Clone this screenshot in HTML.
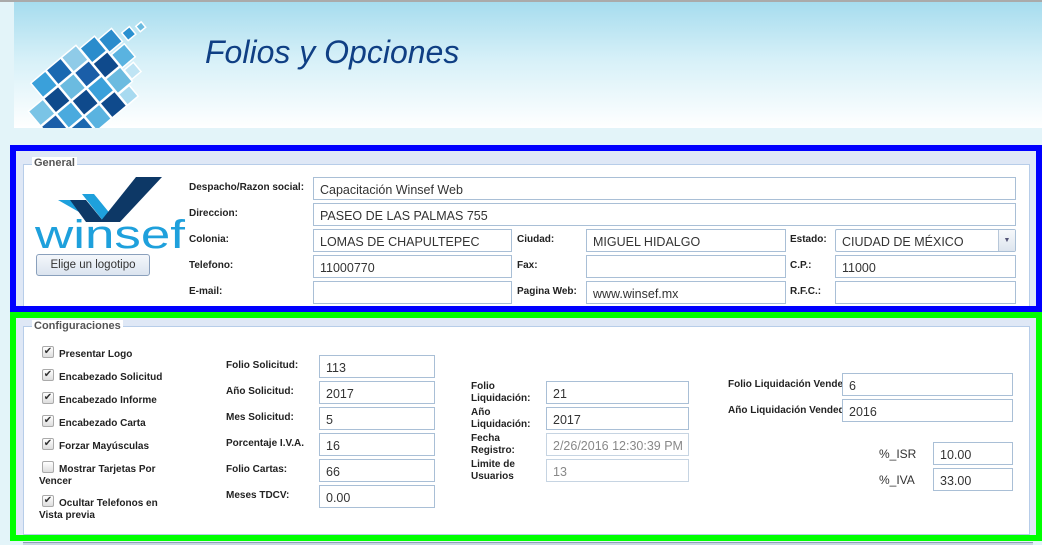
<!DOCTYPE html>
<html><head><meta charset="utf-8"><style>
*{margin:0;padding:0;box-sizing:border-box}
body{width:1042px;height:545px;overflow:hidden;background:#e3f4f9;font-family:"Liberation Sans",Arial,sans-serif;position:relative}
.a{position:absolute}
.hdr{left:14px;top:2px;width:1028px;height:126px;background:linear-gradient(#a6dcee 0%,#d6f0f8 45%,#fff 100%);overflow:hidden}
.title{left:191px;top:32px;font-size:32px;font-style:italic;color:#0f3f84;white-space:nowrap}
.box{border:6px solid #0000ff;background:#dfe8f6}
.fs{border:1px solid #b7cde9;background:#fff}
.lg{font-size:11px;font-weight:bold;color:#555;background:#fff;padding:0 2px}
.l{font-size:10px;font-weight:bold;color:#222;white-space:nowrap;line-height:12px}
.i{border:1px solid #a9bfd6;background:#fff;height:23px;font-size:12.5px;color:#333;padding:5px 0 0 6px;white-space:nowrap;overflow:hidden}
.g{color:#888;border-color:#c6d4e2}
.cb{width:12px;height:12px;border:1px solid #aaa;border-radius:2px;background:linear-gradient(#fff,#ddd);font-size:10px;line-height:10px;text-align:center;color:#333}
.ct{font-size:10px;font-weight:bold;color:#222;line-height:12px}
</style></head><body>
<div class="a" style="left:0;top:0;width:1042px;height:2px;background:#aaa"></div>
<div class="a hdr">
<svg width="200" height="126" style="position:absolute;left:0;top:0">
<g stroke="#fff" stroke-width="1.5" transform="translate(40,140) rotate(-40)">
<rect x="0" y="-40" width="19" height="19" fill="#7ac4e6"/><rect x="0" y="-20" width="19" height="19" fill="#1a5ea8"/><rect x="0" y="0" width="19" height="19" fill="#2a8ccc"/>
<rect x="20" y="-60" width="19" height="19" fill="#3aa0da"/><rect x="20" y="-40" width="19" height="19" fill="#0f4a8c"/><rect x="20" y="-20" width="19" height="19" fill="#4aaade"/><rect x="20" y="0" width="19" height="19" fill="#1a68b0"/>
<rect x="40" y="-60" width="19" height="19" fill="#1a68b0"/><rect x="40" y="-40" width="19" height="19" fill="#6bbbe0"/><rect x="40" y="-20" width="19" height="19" fill="#0f4a8c"/><rect x="40" y="0" width="19" height="19" fill="#5ab3e0"/>
<rect x="60" y="-60" width="19" height="19" fill="#8fcbe8"/><rect x="60" y="-40" width="19" height="19" fill="#1a5ea8"/><rect x="60" y="-20" width="19" height="19" fill="#3aa0da"/><rect x="60" y="0" width="19" height="19" fill="#0f4a8c"/>
<rect x="80" y="-55" width="19" height="19" fill="#2a8ccc"/><rect x="80" y="-35" width="19" height="19" fill="#0f4a8c"/><rect x="80" y="-15" width="19" height="19" fill="#6bbbe0"/><rect x="80" y="5" width="14" height="14" fill="#a8daf0"/>
<rect x="100" y="-50" width="17" height="17" fill="#2a8ccc"/><rect x="100" y="-30" width="17" height="17" fill="#5ab3e0"/><rect x="100" y="-10" width="12" height="12" fill="#bfe4f4"/>
<rect x="122" y="-40" width="10" height="10" fill="#2a90d0"/><rect x="137" y="-36" width="7" height="7" fill="#6bbbe0"/>
</g></svg>
<div class="a title">Folios y Opciones</div>
</div>

<!-- General -->
<div class="a box" style="left:10px;top:145px;width:1032px;height:167px"></div>
<div class="a fs" style="left:23px;top:164px;width:1007px;height:142px;border-bottom:none"></div>
<div class="a lg" style="left:32px;top:157px">General</div>
<svg class="a" style="left:34px;top:176px" width="155" height="76">
<polygon points="24,24 46,24 56,34 52,40" fill="#1ea0dc"/>
<polygon points="36,24 52,24 70,46 52,46" fill="#0d3866"/>
<polygon points="48,18 60,18 78,40 70,46" fill="#1ea0dc"/>
<polygon points="102,1 128,1 86,46 66,46" fill="#0d3866"/>
<text x="1" y="72" font-family="Liberation Sans,sans-serif" font-size="40" fill="#1ea0dc" textLength="150" lengthAdjust="spacingAndGlyphs">winsef</text>
</svg>
<div class="a" style="left:36px;top:254px;width:114px;height:22px;border:1px solid #8aa0bc;border-radius:3px;background:linear-gradient(#f4f7fb,#dbe4ef);font-size:11.5px;color:#333;text-align:center;line-height:20px">Elige un logotipo</div>

<div class="a l" style="left:189px;top:182px">Despacho/Razon social:</div>
<div class="a i" style="left:313px;top:177px;width:703px">Capacitación Winsef Web</div>
<div class="a l" style="left:189px;top:208px">Direccion:</div>
<div class="a i" style="left:313px;top:203px;width:703px">PASEO DE LAS PALMAS 755</div>
<div class="a l" style="left:189px;top:234px">Colonia:</div>
<div class="a i" style="left:313px;top:229px;width:199px">LOMAS DE CHAPULTEPEC</div>
<div class="a l" style="left:517px;top:234px">Ciudad:</div>
<div class="a i" style="left:586px;top:229px;width:200px">MIGUEL HIDALGO</div>
<div class="a l" style="left:790px;top:234px">Estado:</div>
<div class="a i" style="left:835px;top:229px;width:181px;border-radius:2px">CIUDAD DE MÉXICO</div>
<div class="a" style="left:998px;top:230px;width:17px;height:21px;border-left:1px solid #b7c7d9;background:linear-gradient(#f6f8fb,#dde5ee);font-size:7px;color:#557;text-align:center;line-height:21px">▼</div>
<div class="a l" style="left:189px;top:260px">Telefono:</div>
<div class="a i" style="left:313px;top:255px;width:199px">11000770</div>
<div class="a l" style="left:517px;top:260px">Fax:</div>
<div class="a i" style="left:586px;top:255px;width:200px"></div>
<div class="a l" style="left:790px;top:260px">C.P.:</div>
<div class="a i" style="left:835px;top:255px;width:181px">11000</div>
<div class="a l" style="left:189px;top:286px">E-mail:</div>
<div class="a i" style="left:313px;top:281px;width:199px"></div>
<div class="a l" style="left:517px;top:286px">Pagina Web:</div>
<div class="a i" style="left:586px;top:281px;width:200px">www.winsef.mx</div>
<div class="a l" style="left:790px;top:286px">R.F.C.:</div>
<div class="a i" style="left:835px;top:281px;width:181px"></div>

<!-- Configuraciones -->
<div class="a box" style="left:10px;top:312px;width:1032px;height:229px;border-color:#00ff00"></div>
<div class="a fs" style="left:23px;top:326px;width:1007px;height:209px"></div>
<div class="a lg" style="left:32px;top:320px">Configuraciones</div>

<div class="a cb" style="left:42px;top:346px">✔</div><div class="a ct" style="left:59px;top:349px">Presentar Logo</div>
<div class="a cb" style="left:42px;top:369px">✔</div><div class="a ct" style="left:59px;top:372px">Encabezado Solicitud</div>
<div class="a cb" style="left:42px;top:392px">✔</div><div class="a ct" style="left:59px;top:395px">Encabezado Informe</div>
<div class="a cb" style="left:42px;top:415px">✔</div><div class="a ct" style="left:59px;top:418px">Encabezado Carta</div>
<div class="a cb" style="left:42px;top:438px">✔</div><div class="a ct" style="left:59px;top:441px">Forzar Mayúsculas</div>
<div class="a cb" style="left:42px;top:461px"></div><div class="a ct" style="left:39px;top:464px;text-indent:20px;width:130px">Mostrar Tarjetas Por Vencer</div>
<div class="a cb" style="left:42px;top:495px">✔</div><div class="a ct" style="left:39px;top:498px;text-indent:20px;width:130px">Ocultar Telefonos en Vista previa</div>

<div class="a l" style="left:226px;top:360px">Folio Solicitud:</div><div class="a i" style="left:319px;top:355px;width:116px">113</div>
<div class="a l" style="left:226px;top:386px">Año Solicitud:</div><div class="a i" style="left:319px;top:381px;width:116px">2017</div>
<div class="a l" style="left:226px;top:412px">Mes Solicitud:</div><div class="a i" style="left:319px;top:407px;width:116px">5</div>
<div class="a l" style="left:226px;top:438px">Porcentaje I.V.A.</div><div class="a i" style="left:319px;top:433px;width:116px">16</div>
<div class="a l" style="left:226px;top:464px">Folio Cartas:</div><div class="a i" style="left:319px;top:459px;width:116px">66</div>
<div class="a l" style="left:226px;top:490px">Meses TDCV:</div><div class="a i" style="left:319px;top:485px;width:116px">0.00</div>

<div class="a l" style="left:471px;top:381px">Folio<br>Liquidación:</div><div class="a i" style="left:546px;top:381px;width:143px">21</div>
<div class="a l" style="left:471px;top:407px">Año<br>Liquidación:</div><div class="a i" style="left:546px;top:407px;width:143px">2017</div>
<div class="a l" style="left:471px;top:433px">Fecha<br>Registro:</div><div class="a i g" style="left:546px;top:433px;width:143px">2/26/2016 12:30:39 PM</div>
<div class="a l" style="left:471px;top:459px">Limite de<br>Usuarios</div><div class="a i g" style="left:546px;top:459px;width:143px">13</div>

<div class="a l" style="left:728px;top:379px;width:114px;overflow:hidden">Folio Liquidación Vendedor</div><div class="a i" style="left:842px;top:373px;width:171px">6</div>
<div class="a l" style="left:728px;top:405px;width:114px;overflow:hidden">Año Liquidación Vendedor</div><div class="a i" style="left:842px;top:399px;width:171px">2016</div>
<div class="a" style="left:879px;top:447px;font-size:12px;color:#333">%_ISR</div><div class="a i" style="left:933px;top:442px;width:80px">10.00</div>
<div class="a" style="left:879px;top:473px;font-size:12px;color:#333">%_IVA</div><div class="a i" style="left:933px;top:468px;width:80px">33.00</div>

<div class="a" style="left:23px;top:542px;width:1010px;height:3px;background:#c9d6e4;border-top:1px solid #8da0b5"></div>
</body></html>
